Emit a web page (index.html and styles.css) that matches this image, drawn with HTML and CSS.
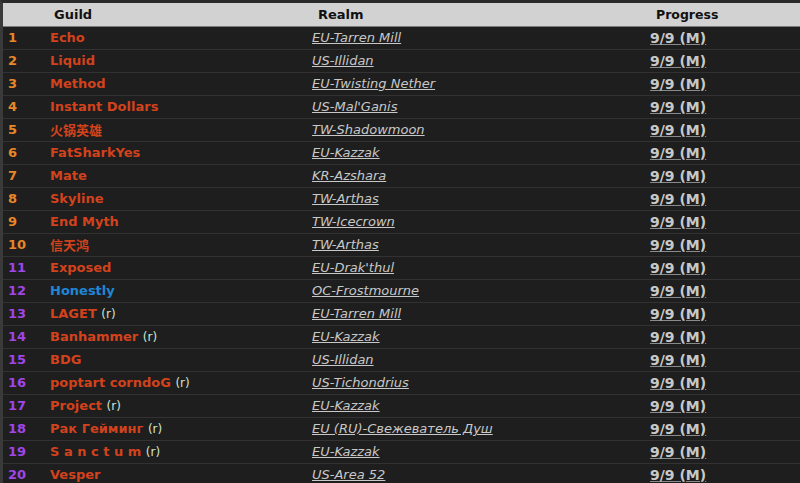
FILE: index.html
```html
<!DOCTYPE html>
<html>
<head>
<meta charset="utf-8">
<link rel="stylesheet" href="styles.css">
</head>
<body>
<div class="frame">
<table class="ranks">
<thead>
<tr><th class="c-rank"></th><th class="c-guild">Guild</th><th class="c-realm">Realm</th><th class="c-prog">Progress</th></tr>
</thead>
<tbody>
<tr><td class="rank top">1</td><td class="guild">Echo</td><td class="realm"><a>EU-Tarren Mill</a></td><td class="prog"><a>9/9 (M)</a></td></tr>
<tr><td class="rank top">2</td><td class="guild">Liquid</td><td class="realm"><a>US-Illidan</a></td><td class="prog"><a>9/9 (M)</a></td></tr>
<tr><td class="rank top">3</td><td class="guild">Method</td><td class="realm"><a>EU-Twisting Nether</a></td><td class="prog"><a>9/9 (M)</a></td></tr>
<tr><td class="rank top">4</td><td class="guild">Instant Dollars</td><td class="realm"><a>US-Mal'Ganis</a></td><td class="prog"><a>9/9 (M)</a></td></tr>
<tr><td class="rank top">5</td><td class="guild">火锅英雄</td><td class="realm"><a>TW-Shadowmoon</a></td><td class="prog"><a>9/9 (M)</a></td></tr>
<tr><td class="rank top">6</td><td class="guild">FatSharkYes</td><td class="realm"><a>EU-Kazzak</a></td><td class="prog"><a>9/9 (M)</a></td></tr>
<tr><td class="rank top">7</td><td class="guild">Mate</td><td class="realm"><a>KR-Azshara</a></td><td class="prog"><a>9/9 (M)</a></td></tr>
<tr><td class="rank top">8</td><td class="guild">Skyline</td><td class="realm"><a>TW-Arthas</a></td><td class="prog"><a>9/9 (M)</a></td></tr>
<tr><td class="rank top">9</td><td class="guild">End Myth</td><td class="realm"><a>TW-Icecrown</a></td><td class="prog"><a>9/9 (M)</a></td></tr>
<tr><td class="rank top">10</td><td class="guild">信天鸿</td><td class="realm"><a>TW-Arthas</a></td><td class="prog"><a>9/9 (M)</a></td></tr>
<tr><td class="rank mid">11</td><td class="guild">Exposed</td><td class="realm"><a>EU-Drak'thul</a></td><td class="prog"><a>9/9 (M)</a></td></tr>
<tr><td class="rank mid">12</td><td class="guild blue">Honestly</td><td class="realm"><a>OC-Frostmourne</a></td><td class="prog"><a>9/9 (M)</a></td></tr>
<tr><td class="rank mid">13</td><td class="guild">LAGET <span class="r">(r)</span></td><td class="realm"><a>EU-Tarren Mill</a></td><td class="prog"><a>9/9 (M)</a></td></tr>
<tr><td class="rank mid">14</td><td class="guild">Banhammer <span class="r">(r)</span></td><td class="realm"><a>EU-Kazzak</a></td><td class="prog"><a>9/9 (M)</a></td></tr>
<tr><td class="rank mid">15</td><td class="guild">BDG</td><td class="realm"><a>US-Illidan</a></td><td class="prog"><a>9/9 (M)</a></td></tr>
<tr><td class="rank mid">16</td><td class="guild">poptart corndoG <span class="r">(r)</span></td><td class="realm"><a>US-Tichondrius</a></td><td class="prog"><a>9/9 (M)</a></td></tr>
<tr><td class="rank mid">17</td><td class="guild">Project <span class="r">(r)</span></td><td class="realm"><a>EU-Kazzak</a></td><td class="prog"><a>9/9 (M)</a></td></tr>
<tr><td class="rank mid">18</td><td class="guild">Рак Гейминг <span class="r">(r)</span></td><td class="realm"><a>EU (RU)-Свежеватель Душ</a></td><td class="prog"><a>9/9 (M)</a></td></tr>
<tr><td class="rank mid">19</td><td class="guild">S a n c t u m <span class="r">(r)</span></td><td class="realm"><a>EU-Kazzak</a></td><td class="prog"><a>9/9 (M)</a></td></tr>
<tr><td class="rank mid">20</td><td class="guild">Vesper</td><td class="realm"><a>US-Area 52</a></td><td class="prog"><a>9/9 (M)</a></td></tr>
</tbody>
</table>
</div>
</body>
</html>
```

FILE: styles.css
```css
html, body {
  margin: 0;
  padding: 0;
  background: #1e1e1e;
}
body {
  font-family: "DejaVu Sans", Verdana, "Noto Sans CJK SC", sans-serif;
  font-size: 13px;
  overflow: hidden;
}
.frame {
  border-top: 3px solid #2a2a2a;
  border-left: 3px solid #3a3a3a;
}
.ranks {
  width: 100%;
  border-collapse: collapse;
  table-layout: fixed;
}
.ranks th {
  box-sizing: border-box;
  background: #d2d2d2;
  color: #111;
  font-weight: bold;
  text-align: left;
  height: 23px;
  padding: 0;
  border-bottom: 1px solid #7a7a7a;
}
.c-rank { width: 47px; }
.c-guild { width: 262px; }
.c-realm { width: 338px; }
.ranks th.c-guild { padding-left: 4px; }
.ranks th.c-realm { padding-left: 6px; }
.ranks th.c-prog { padding-left: 6px; font-size: 12.5px; }
.ranks td {
  height: 22px;
  padding: 0;
  border-bottom: 1px solid #323232;
  white-space: nowrap;
  font-weight: bold;
}
.ranks td.rank { padding-left: 5px; }
.rank.top { color: #e8862a; }
.rank.mid { color: #a045e8; }
.guild { color: #d2421c; }
.guild.blue { color: #1f86d6; }
.r {
  color: #cde3cd;
  font-weight: normal;
  font-size: 12px;
}
.realm a {
  color: #c8c8c8;
  font-style: italic;
  font-weight: normal;
  text-decoration: underline;
}
.prog a {
  color: #c8c8c8;
  font-size: 14px;
  text-decoration: underline;
  text-decoration-color: #8a8a8a;
}
```
